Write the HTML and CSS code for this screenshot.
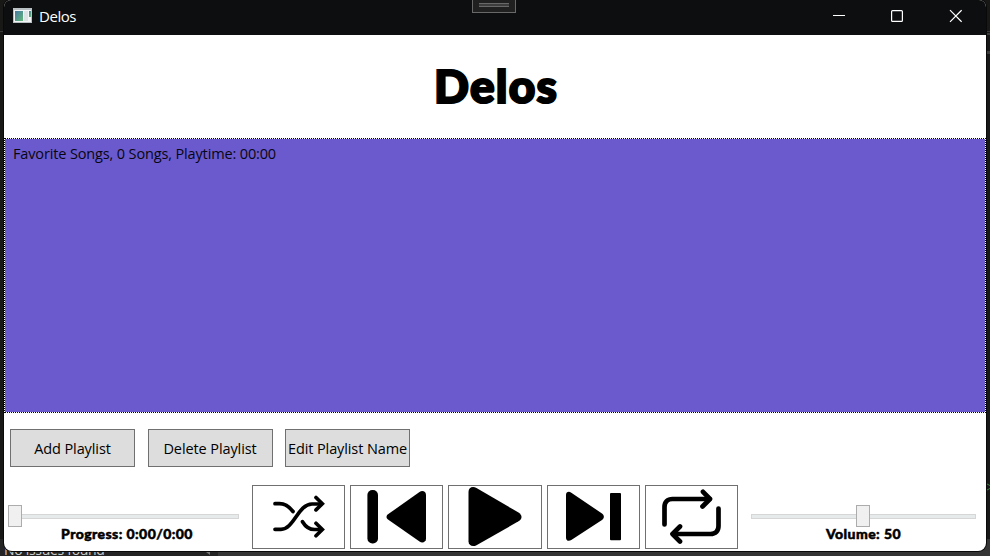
FILE: index.html
```html
<!DOCTYPE html>
<html lang="en">
<head>
<meta charset="utf-8">
<title>Delos</title>
<link rel="stylesheet" href="styles.css">
</head>
<body>
<div class="backdrop"><i class="edge e1"></i><i class="edge e2"></i><i class="edge e3"></i><i class="edge e4"></i><svg class="code" width="3" height="8" viewBox="0 0 3 8" fill="none" stroke="#38863b"><path d="M0 1l3 1.500M0 7l3-1.500"/></svg>
  <div class="status"><span>No issues found</span><i class="corner"></i></div>
</div>
<main class="window">
  <header class="titlebar">
    <svg class="appicon" width="19" height="16" viewBox="0 0 19 16"><defs><linearGradient id="g" x2="1" y2="1"><stop stop-color="#4777a3"/><stop offset="1" stop-color="#62b878"/></linearGradient></defs><path fill="#b9c1c5" d="M0 0h19v15H0z"/><path fill="#f2f4f5" d="M1 2h17v12H1z"/><path fill="url(#g)" d="M2 3h8v10H2z"/><path fill="#dde2e4" d="M11 3h4v10h-4z"/><path fill="url(#g)" d="M16 3h2v6h-2z"/></svg>
    <span class="caption">Delos</span>
    <svg class="winctl" width="130" height="14" viewBox="832 9 130 14" fill="none" stroke="#fff" stroke-width="1.2"><path d="M833 15.5h12"/><rect x="891.6" y="10.6" width="10.8" height="10.8" rx="1"/><path d="M950 10.2l11.6 11.6M961.6 10.2L950 21.8"/></svg>
    <div class="grip"><i></i></div>
  </header>
  <section class="heading"><h1>Delos</h1></section>
  <section class="playlists"><p>Favorite Songs, 0 Songs, Playtime: 00:00</p></section>
  <nav class="actions">
    <button>Add Playlist</button>
    <button>Delete Playlist</button>
    <button>Edit Playlist Name</button>
  </nav>
  <footer class="player">
    <div class="slider progress"><div class="track"><i class="thumb"></i></div><span>Progress: 0:00/0:00</span></div>
    <div class="transport">
      <button aria-label="Shuffle"><svg viewBox="252 485 93 64"><g class="line thin"><path d="M275 503.7h4.5c6 0 10 3.3 13.5 7.8M275 529.3h6c13 0 17-25.3 31-25.3h9M302.5 521.7c3 5 7 7.8 12 7.8h7"/><path stroke-linejoin="miter" d="M316 497.5l6.3 6.2-6.3 6.2M316 523.3l6.3 6.2-6.3 6.2"/></g></svg></button>
      <button aria-label="Previous"><svg viewBox="350 485 93 64"><rect x="367.4" y="490" width="10.6" height="53.5" rx="5"/><path d="M388 514.3L419.5 492c3-2 6.5-.5 6.500 3v43.500c0 3.500-3.500 5-6.500 3L388 519.500c-2-1.500-2-3.700 0-5.200z"/></svg></button>
      <button aria-label="Play"><svg viewBox="448 485 94 64"><path d="M468.500 492c0-4.500 4-6.200 8-4L518.500 512.500c4 2.700 4 6.300 0 8.800L476.500 545.200c-4 2-8 .3-8-4z"/></svg></button>
      <button aria-label="Next"><svg viewBox="547 485 93 64"><path d="M566 495c0-3 2.700-4 5.300-2.300L602 513.500c2.500 2 2.500 4.500 0 6.500L571.300 540c-2.600 1.700-5.300.7-5.300-2.300z"/><rect x="610" y="493" width="11" height="47.300" rx="1"/></svg></button>
      <button aria-label="Repeat"><svg viewBox="645 485 93 64"><g class="line thick"><path d="M664.500 524.500V507c0-5 3-8 8-8h37M718.500 508.500V526c0 5-3 8-8 8h-37"/><path d="M703 491.800l7 7.200-7.500 7.500M680 526.500l-7.500 7.500 7.500 7.500"/></g></svg></button>
    </div>
    <div class="slider volume"><div class="track"><i class="thumb"></i></div><span>Volume: 50</span></div>
  </footer>
</main>
</body>
</html>
```

FILE: styles.css
```css
* { box-sizing: border-box; }
body { margin: 0; width: 990px; height: 556px; overflow: hidden; background: #181817; font-family: "Open Sans", "Noto Sans", sans-serif; }
.backdrop { position: absolute; inset: 0; overflow: hidden; }
.status { position: absolute; left: 0; right: 0; bottom: 0; height: 17px; background: #353535; color: #c9c9c9; font-size: 14px; line-height: 21px; letter-spacing: -.3px; }
.status span { display: block; width: 218px; height: 17px; padding-left: 4px; background: #242425; }
.corner { position: absolute; left: 206px; top: 13px; border: solid transparent; border-width: 0 0 4px 4px; border-right: 0; border-top: 3px solid #777; }
.edge { position: absolute; background: #3b3b3b; height: 1px; width: 4px; }
.e1 { left: 0; top: 31px; }
.e2 { right: 0; top: 31px; }
.e3 { right: 0; top: 33px; height: 2px; }
.e4 { right: 0; top: 51px; height: 3px; }
.code { position: absolute; right: 0; top: 483px; }
.window { position: relative; display: flex; flex-direction: column; width: 982px; height: 551px; margin: 0 4px; background: #fff; border-radius: 7px 7px 8px 8px; box-shadow: 0 0 0 1px #090909; overflow: hidden; }
.titlebar { height: 35px; flex: none; display: flex; align-items: flex-start; padding: 8px 24px 0 9px; background: #0c0e0f; color: #fff; }
.caption { margin: -3px 0 0 7px; font-size: 15px; line-height: 22px; letter-spacing: -.45px; }
.winctl { margin: 1px 0 0 auto; }
.grip { position: absolute; left: 468px; top: -1px; width: 44px; height: 14px; border: 1px solid #686868; background: #202020; padding: 3px 6px; }
.grip i { display: block; height: 4px; border: solid #686868; border-width: 1px 0; background: #3d3d3d; }
.heading { height: 103px; flex: none; display: flex; justify-content: center; }
h1 { margin: 23px 0 0; padding-left: 2px; font: 900 46px/56px Lato, sans-serif; letter-spacing: 1.2px; -webkit-text-stroke: 2.200px #000; }
.playlists { height: 275px; flex: none; background: #6a5acd; background-clip: padding-box; border: 1px dotted #000; padding: 4px 8px; }
.playlists p { margin: 0; font-size: 14.500px; line-height: 21px; letter-spacing: -.14px; color: #08060f; white-space: nowrap; }
button { appearance: none; border: 1px solid #707070; margin: 0; padding: 0; border-radius: 0; background: #ddd; color: #000; font: inherit; }
.actions { display: flex; gap: 12.500px; height: 38px; margin: 16px 0 0 6px; flex: none; }
.actions button { width: 125px; font-size: 14.500px; letter-spacing: -.1px; white-space: nowrap; display: flex; justify-content: center; align-items: center; }
.player { display: flex; height: 64px; margin-top: 18px; padding-left: 4px; flex: none; }
.slider { width: 231px; padding-top: 29px; display: flex; flex-direction: column; align-items: center; font: 900 14px/18px Lato, sans-serif; letter-spacing: .42px; -webkit-text-stroke: .5px #000; white-space: nowrap; }
.track { position: relative; width: 100%; height: 5px; flex: none; background: #e7eaea; border: 1px solid #d6d6d6; }
.thumb { position: absolute; left: -1px; top: -10px; width: 14px; height: 22px; background: #f0f0f0; border: 1px solid #acacac; }
.slider span { margin-top: 6px; }
.transport { display: grid; grid-template-columns: 93px 93px 94px 93px 93px; gap: 5px; margin: 0 13px; }
.transport button { background: #fff; }
.transport svg { display: block; width: calc(100% + 2px); height: 64px; margin: -1px; }
.line { fill: none; stroke: #000; stroke-linecap: round; stroke-linejoin: round; }
.thin { stroke-width: 3.700; }
.thick { stroke-width: 4.700; }
.volume { width: 225px; }
.volume .thumb { left: 104px; }
.progress span { margin-left: 7px; }
```
